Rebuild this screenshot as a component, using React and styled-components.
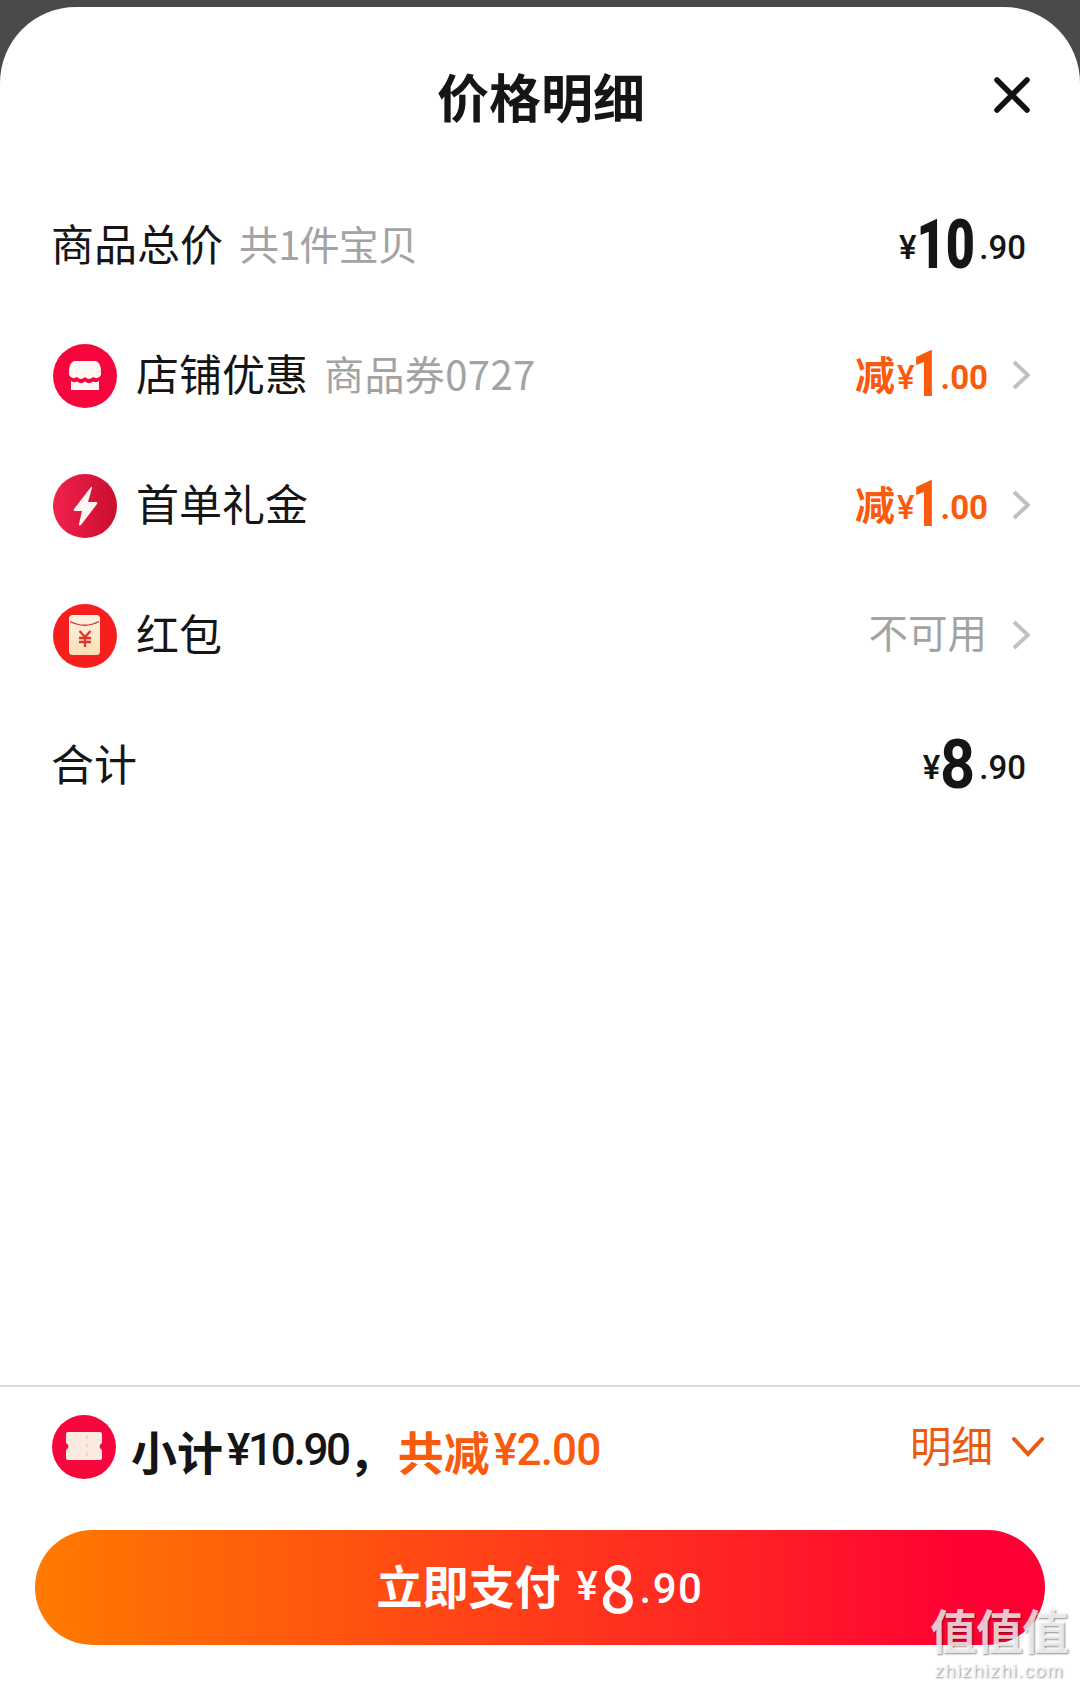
import React from "react";
import styled, { createGlobalStyle } from "styled-components";

const CJK = `"Noto Sans CJK SC", "Noto Sans", sans-serif`;
const NUM = `"Roboto", "Noto Sans CJK SC", sans-serif`;
const ORANGE = "#f95a0b";
const INK = "#151515";

const Global = createGlobalStyle`
  html, body { margin: 0; padding: 0; background: #4a4a4a; }
  body { width: 1080px; height: 1690px; overflow: hidden; font-family: ${CJK}; color: ${INK}; }
`;

const Page = styled.div`
  position: relative;
  width: 1080px;
  height: 1690px;
  padding-top: 7px;
  box-sizing: border-box;
`;
const Sheet = styled.main`
  width: 1080px;
  height: 1683px;
  background: #fff;
  border-radius: 76px 76px 0 0;
  display: flex;
  flex-direction: column;
`;
const Header = styled.header`
  height: 173px;
  padding: 0 50px 0 52px;
  display: grid;
  grid-template-columns: 1fr auto 1fr;
  align-items: center;
  flex: none;
`;
const Title = styled.h1`
  grid-column: 2;
  margin: 0;
  padding-top: 4px;
  font-size: 52px;
  line-height: 70px;
  font-weight: 700;
`;
const Close = styled.button`
  grid-column: 3;
  justify-self: end;
  border: 0;
  background: none;
  padding: 0;
  margin: 3px 0 0;
  width: 36px;
  height: 36px;
  display: block;
`;
const List = styled.section`
  display: flex;
  flex-direction: column;
  padding: 0 52px;
`;
const Row = styled.div`
  height: 130px;
  display: flex;
  align-items: center;
  gap: 19px;
`;
const Badge = styled.span`
  width: 64px;
  height: 64px;
  margin: 2px 1px 0 1px;
  flex: none;
  display: block;
  svg { display: block; }
`;
const Label = styled.span`
  font-size: 43px;
  line-height: 56px;
  padding-bottom: 6px;
  margin-left: -1px;
  font-weight: 400;
  white-space: nowrap;
`;
const Sub = styled.span`
  font-size: 40px;
  line-height: 56px;
  padding-bottom: 5px;
  color: #a3a3a3;
  margin-left: -3px;
  white-space: nowrap;
  letter-spacing: ${(p) => (p.$tight ? "-0.8px" : "0.4px")};
`;
const Right = styled.div`
  margin-left: auto;
  display: flex;
  align-items: center;
`;
const Amount = styled.span`
  display: flex;
  align-items: center;
  font-family: ${NUM};
  color: ${(p) => p.$color || INK};
  white-space: nowrap;
  padding-right: 2px;
`;
const Minus = styled.span`
  font-family: ${CJK};
  font-size: 40px;
  line-height: 56px;
  font-weight: 700;
  padding-bottom: 4px;
  margin-right: 2px;
`;
const Yen = styled.span`
  font-size: 33px;
  font-weight: 500;
  line-height: 40px;
  padding-top: 6px;
`;
const Big = styled.span`
  display: inline-block;
  font-size: ${(p) => p.$size}px;
  font-weight: ${(p) => p.$weight || 700};
  line-height: 70px;
  transform: scaleX(${(p) => p.$scale});
  transform-origin: right center;
  margin-left: ${(p) => -(1 - p.$scale) * 0.57 * p.$digits}em;
`;
const DiscountBig = styled(Big)`
  margin-left: ${(p) => -(1 - p.$scale) * 0.57 * p.$digits - 0.03}em;
`;
const Cents = styled.span`
  font-size: 33px;
  font-weight: ${(p) => p.$weight || 500};
  line-height: 40px;
  padding-top: 6px;
  margin-left: ${(p) => p.$gap ?? 4}px;
`;
const Arrow = styled.span`
  width: 18px;
  height: 30px;
  margin-left: 24px;
  margin-right: -2px;
  flex: none;
  svg { display: block; }
`;
const DiscountAmount = styled(Amount)`
  padding-right: 0;
`;
const Muted = styled.span`
  font-size: 39.5px;
  line-height: 56px;
  padding-bottom: 8px;
  margin-left: -2px;
  margin-right: 1px;
  color: #a3a3a3;
`;
const Footer = styled.footer`
  margin-top: auto;
  border-top: 2px solid #dcdcdc;
  padding: 28px 35px 45px;
  display: flex;
  flex-direction: column;
  gap: 51px;
`;
const Summary = styled.div`
  display: flex;
  align-items: center;
  height: 64px;
`;
const SummaryBadge = styled(Badge)`
  margin: 0 15px 0 17px;
`;
const SummaryText = styled.span`
  display: flex;
  align-items: center;
  font-size: 46px;
  line-height: 64px;
  padding-top: 5px;
  margin-left: ${(p) => p.$gap || 0}px;
  font-weight: 700;
  white-space: nowrap;
  color: ${(p) => p.$color || INK};
`;
const SummaryNum = styled.span`
  font-family: ${NUM};
  font-size: 44px;
  font-weight: 500;
  margin-left: 4px;
  letter-spacing: ${(p) => p.$spacing}px;
`;
const Detail = styled.div`
  margin-left: auto;
  margin-right: 1px;
  display: flex;
  align-items: center;
  gap: 19px;
  color: #ea5b10;
  font-size: 41.5px;
  margin-top: -6px;
  svg { margin-top: 6px; }
`;
const PayButton = styled.button`
  width: 1010px;
  height: 115px;
  border: 0;
  border-radius: 58px;
  background: linear-gradient(90deg, #ff7a00 0%, #ff1f26 72%, #ff0033 92%);
  color: #fff;
  display: flex;
  align-items: center;
  justify-content: center;
  padding: 0 0 8px;
  box-sizing: border-box;
  font-family: ${CJK};
`;
const PayLabel = styled.span`
  font-size: 46px;
  line-height: 60px;
  font-weight: 700;
  margin-right: 16px;
`;
const PayYen = styled.span`
  font-family: ${NUM};
  font-size: 40px;
  line-height: 50px;
  padding-top: 6px;
  font-weight: 500;
  margin-right: 2px;
`;
const PayCents = styled.span`
  font-family: ${NUM};
  font-size: 42px;
  line-height: 50px;
  padding-top: 10px;
  font-weight: 500;
  margin-left: 4px;
  letter-spacing: 1.5px;
`;
const Watermark = styled.div`
  position: absolute;
  right: 11px;
  bottom: 8px;
  width: 140px;
  display: flex;
  flex-direction: column;
  align-items: center;
  color: rgba(255,255,255,.78);
  text-shadow: 1px 1px 2px rgba(0,0,0,.45);
`;
const MarkGlyphs = styled.div`
  font-family: "Liberation Sans", "Noto Sans CJK SC", sans-serif;
  font-size: 47px;
  height: 54px;
  line-height: 54px;
  letter-spacing: -1px;
  font-weight: 700;
  white-space: nowrap;
`;
const MarkUrl = styled.div`
  font-family: "Liberation Sans", sans-serif;
  font-size: 19px;
  height: 22px;
  line-height: 22px;
  letter-spacing: 1.2px;
  white-space: nowrap;
`;

const Chevron = () => (
  <Arrow>
    <svg width="18" height="30" viewBox="0 0 18 30" fill="none">
      <path d="M2 2 L16 15 L2 28" stroke="#c0c0c0" strokeWidth="4" />
    </svg>
  </Arrow>
);

const StoreIcon = () => (
  <svg width="64" height="64" viewBox="0 0 64 64">
    <circle cx="32" cy="32" r="32" fill="#f5073d" />
    <path d="M21 17 H43 Q48 19 48 28 V31 Q45 36 40 33 Q36 37 32 33 Q28 37 24 33 Q19 36 16 31 V28 Q16 19 21 17 Z" fill="#fff8f4" />
    <path d="M18 37 Q21 39 24 37.5 Q28 41 32 37.5 Q36 41 40 37.5 Q43 39 46 37 V46 H18 Z" fill="#fff8f4" />
  </svg>
);
const BoltIcon = () => (
  <svg width="64" height="64" viewBox="0 0 64 64">
    <defs>
      <linearGradient id="bolt" x1="0" x2="1" y1="0" y2="0">
        <stop offset="0" stopColor="#f2204f" />
        <stop offset="1" stopColor="#c90f2c" />
      </linearGradient>
    </defs>
    <circle cx="32" cy="32" r="32" fill="url(#bolt)" />
    <path d="M38 13 L21 35 Q20 37 22 37 H29 L26 50 Q26 53 28 51 L44 30 Q45 28 43 28 H35 L39 14 Q39 12 38 13 Z" fill="#fff6f2" />
  </svg>
);
const PacketIcon = () => (
  <svg width="64" height="64" viewBox="0 0 64 64">
    <defs>
      <linearGradient id="packet" x1="0" x2="0" y1="0" y2="1">
        <stop offset="0" stopColor="#fdf2e4" />
        <stop offset="1" stopColor="#fbe0b6" />
      </linearGradient>
    </defs>
    <circle cx="32" cy="32" r="32" fill="#f71e1e" />
    <rect x="16" y="11" width="31" height="40" rx="3.5" fill="url(#packet)" />
    <path d="M17 17.5 Q32 25 46 17.5" stroke="#d9352c" strokeWidth="1.3" fill="none" />
    <path d="M26.5 27 L32 33 L37.5 27 M26 34 H38 M26 38 H38 M32 33 V43" stroke="#e0352c" strokeWidth="2.3" fill="none" />
  </svg>
);
const TicketIcon = () => (
  <svg width="64" height="64" viewBox="0 0 64 64">
    <circle cx="32" cy="32" r="32" fill="#f5073d" />
    <path d="M16 17 H48 Q50 17 50 19 V28 Q45 31.5 50 35 V43 Q50 45 48 45 H16 Q14 45 14 43 V35 Q19 31.5 14 28 V19 Q14 17 16 17 Z" fill="#faebe0" />
    <path d="M35 20 V43" stroke="#eed6c8" strokeWidth="2.4" strokeDasharray="4 4.5" />
  </svg>
);

const Price = ({ big, cents, size, scale, weight, digits }) => (
  <Amount>
    <Yen>¥</Yen>
    <Big $size={size} $scale={scale} $weight={weight} $digits={digits}>{big}</Big>
    <Cents>.{cents}</Cents>
  </Amount>
);
const Discount = () => (
  <DiscountAmount $color={ORANGE}>
    <Minus>减</Minus>
    <Yen>¥</Yen>
    <DiscountBig $size={64} $scale={0.75} $weight={900} $digits={1}>1</DiscountBig>
    <Cents $weight={700} $gap={0}>.00</Cents>
  </DiscountAmount>
);

export default function App() {
  return (
    <Page>
      <Global />
      <Sheet>
        <Header>
          <Title>价格明细</Title>
          <Close aria-label="关闭">
            <svg width="36" height="36" viewBox="0 0 36 36" fill="none">
              <path d="M3 3 L33 33 M33 3 L3 33" stroke="#111" strokeWidth="5.5" strokeLinecap="round" />
            </svg>
          </Close>
        </Header>
        <List>
          <Row>
            <Label>商品总价</Label>
            <Sub $tight>共1件宝贝</Sub>
            <Right><Price big="10" cents="90" size={68} scale={0.74} weight={900} digits={2} /></Right>
          </Row>
          <Row>
            <Badge><StoreIcon /></Badge>
            <Label>店铺优惠</Label>
            <Sub>商品券0727</Sub>
            <Right><Discount /><Chevron /></Right>
          </Row>
          <Row>
            <Badge><BoltIcon /></Badge>
            <Label>首单礼金</Label>
            <Right><Discount /><Chevron /></Right>
          </Row>
          <Row>
            <Badge><PacketIcon /></Badge>
            <Label>红包</Label>
            <Right><Muted>不可用</Muted><Chevron /></Right>
          </Row>
          <Row>
            <Label>合计</Label>
            <Right><Price big="8" cents="90" size={68} scale={0.9} weight={700} digits={1} /></Right>
          </Row>
        </List>
        <Footer>
          <Summary>
            <SummaryBadge><TicketIcon /></SummaryBadge>
            <SummaryText>小计<SummaryNum $spacing={-2.3}>¥10.90</SummaryNum>，</SummaryText>
            <SummaryText $color={ORANGE} $gap={3}>共减<SummaryNum $spacing={-0.8}>¥2.00</SummaryNum></SummaryText>
            <Detail>
              明细
              <svg width="32" height="22" viewBox="0 0 32 22" fill="none">
                <path d="M2 3 L16 18 L30 3" stroke="#ea5b10" strokeWidth="4" strokeLinecap="round" />
              </svg>
            </Detail>
          </Summary>
          <PayButton>
            <PayLabel>立即支付</PayLabel>
            <PayYen>¥</PayYen>
            <Big $size={66} $scale={0.95} $weight={500} $digits={1}>8</Big>
            <PayCents>.90</PayCents>
          </PayButton>
        </Footer>
      </Sheet>
      <Watermark>
        <MarkGlyphs>值值值</MarkGlyphs>
        <MarkUrl>zhizhizhi.com</MarkUrl>
      </Watermark>
    </Page>
  );
}
